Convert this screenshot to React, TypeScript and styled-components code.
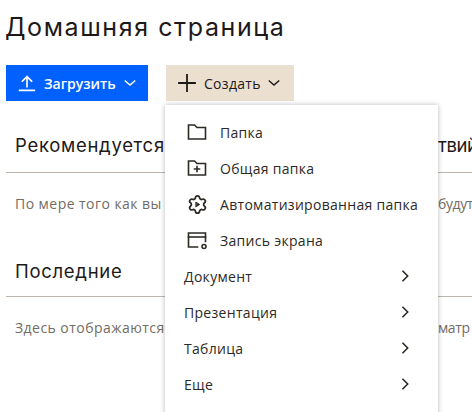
import React from "react";
import styled, { createGlobalStyle } from "styled-components";

const Global = createGlobalStyle`
  html, body { margin: 0; padding: 0; background: #fff; }
  body { font-family: "Open Sans", "Liberation Sans", sans-serif; color: #1e1919; overflow: hidden; }
  #root { width: 472px; height: 412px; overflow: hidden; }
`;

const Page = styled.div`
  position: relative;
  width: 472px;
  height: 412px;
  padding: 12px 0 0 5px;
  box-sizing: border-box;
  overflow: hidden;
`;
const Title = styled.h1`
  margin: 0;
  font: 400 25px/30px Inter, sans-serif;
  letter-spacing: 1.6px;
  color: #1e1919;
  white-space: nowrap;
`;
const Toolbar = styled.div`
  display: flex;
  gap: 18px;
  margin: 23px 0 0 1px;
`;
const ActionButton = styled.button<{ $primary?: boolean }>`
  display: flex;
  align-items: center;
  height: 36px;
  border: 0;
  padding: 0 0 0 ${(p) => (p.$primary ? "10px" : "9px")};
  width: ${(p) => (p.$primary ? "142px" : "128px")};
  justify-content: flex-start;
  gap: ${(p) => (p.$primary ? "6px" : "5px")};
  background: ${(p) => (p.$primary ? "#0061fe" : "#ebe0cf")};
  color: ${(p) => (p.$primary ? "#fff" : "#1e1919")};
  font: ${(p) => (p.$primary ? 600 : 400)} 14px "Open Sans", sans-serif;
  letter-spacing: ${(p) => (p.$primary ? "0" : "0.3px")};
`;
const Section = styled.section<{ $top: number }>`
  margin-top: ${(p) => p.$top}px;
`;
const Line = styled.div`
  display: grid;
  grid-template-columns: 423px 1fr;
  padding-left: 10px;
  white-space: nowrap;
`;
const SectionTitle = styled(Line)`
  font: 400 18.5px/24px Inter, sans-serif;
  letter-spacing: 0.7px;
`;
const Rule = styled.hr<{ $gap: number }>`
  margin: ${(p) => p.$gap}px 0 0 1px;
  border: 0;
  height: 1px;
  background: #bbb5ae;
`;
const Hint = styled(Line)`
  margin-top: 21px;
  font: 400 14px/20px "Open Sans", sans-serif;
  letter-spacing: 0.45px;
  color: #736c64;
`;
const Tail = styled.span`
  letter-spacing: -0.4px;
`;
const Menu = styled.div`
  position: absolute;
  left: 165px;
  top: 105px;
  width: 273px;
  height: 320px;
  box-sizing: border-box;
  padding: 9px 0;
  background: #fff;
  box-shadow: 0 0 5px rgba(0, 0, 0, 0.28);
`;
const MenuRow = styled.div`
  display: flex;
  align-items: center;
  height: 36px;
  padding: 0 25px 0 19px;
  font: 400 14px "Open Sans", sans-serif;
  letter-spacing: 0.3px;
  color: #2d2a26;
  white-space: nowrap;
`;
const IconSlot = styled.span`
  display: flex;
  flex: none;
  align-items: center;
  justify-content: center;
  width: 24px;
  margin: 0 11px 0 1px;
`;
const Chevron = styled.span`
  display: flex;
  margin-left: auto;
`;

const Svg = ({ size = 24, w = 1.6, children }: { size?: number; w?: number; children: React.ReactNode }) => (
  <svg width={size} height={size} viewBox="0 0 24 24" fill="none" stroke="currentColor" strokeWidth={w} strokeLinecap="square">
    {children}
  </svg>
);
const Down = () => <Svg size={16} w={2.2}><path d="M5 9l7 6 7-6" /></Svg>;
const Right = () => <Svg size={16} w={2.4}><path d="M9 5l7 7-7 7" /></Svg>;

const menuIcons = [
  <Svg key="f"><path d="M3.5 5h6l2.5 2.5h8.5v11.5h-17z" /></Svg>,
  <Svg key="s"><path d="M3.5 5h6l2.5 2.5h8.5v11.5h-17z" /><path d="M12 10.5v5M9.5 13h5" /></Svg>,
  <Svg key="a" size={21} w={2}>
    <path d="M9.671 4.136a2.34 2.34 0 0 1 4.659 0 2.34 2.34 0 0 0 3.319 1.915 2.34 2.34 0 0 1 2.33 4.033 2.34 2.34 0 0 0 0 3.831 2.34 2.34 0 0 1-2.33 4.033 2.34 2.34 0 0 0-3.319 1.915 2.34 2.34 0 0 1-4.659 0 2.34 2.34 0 0 0-3.32-1.915 2.34 2.34 0 0 1-2.33-4.033 2.34 2.34 0 0 0 0-3.831A2.34 2.34 0 0 1 6.35 6.051a2.34 2.34 0 0 0 3.319-1.915" />
    <path d="M10.5 9.5l4 2.5-4 2.5z" fill="currentColor" strokeWidth={1} />
  </Svg>,
  <Svg key="r"><path d="M12.5 19H3.5V5h17v8.5" /><path d="M3.5 9h17" /><circle cx="19" cy="18.5" r="2" /></Svg>,
];

export default function App() {
  return (
    <Page>
      <Global />
      <Title>Домашняя страница</Title>
      <Toolbar>
        <ActionButton $primary>
          <Svg size={22} w={1.8}><path d="M12 16V5M7 10l5-5 5 5M4 20h16" /></Svg>
          Загрузить
          <Down />
        </ActionButton>
        <ActionButton>
          <Svg size={24} w={1.8}><path d="M12 4v16M4 12h16" /></Svg>
          Создать
          <Down />
        </ActionButton>
      </Toolbar>
      <Section $top={32}>
        <SectionTitle><span>Рекомендуется</span><Tail>твий</Tail></SectionTitle>
        <Rule $gap={15} />
        <Hint><span>По мере того как вы</span><Tail>будут</Tail></Hint>
      </Section>
      <Section $top={45}>
        <SectionTitle><span>Последние</span></SectionTitle>
        <Rule $gap={13} />
        <Hint><span>Здесь отображаются</span><Tail>матр</Tail></Hint>
      </Section>
      <Menu>
        {["Папка", "Общая папка", "Автоматизированная папка", "Запись экрана"].map((t, i) => (
          <MenuRow key={t}>
            <IconSlot>{menuIcons[i]}</IconSlot>
            {t}
          </MenuRow>
        ))}
        {["Документ", "Презентация", "Таблица", "Еще"].map((t) => (
          <MenuRow key={t}>
            {t}
            <Chevron><Right /></Chevron>
          </MenuRow>
        ))}
      </Menu>
    </Page>
  );
}
